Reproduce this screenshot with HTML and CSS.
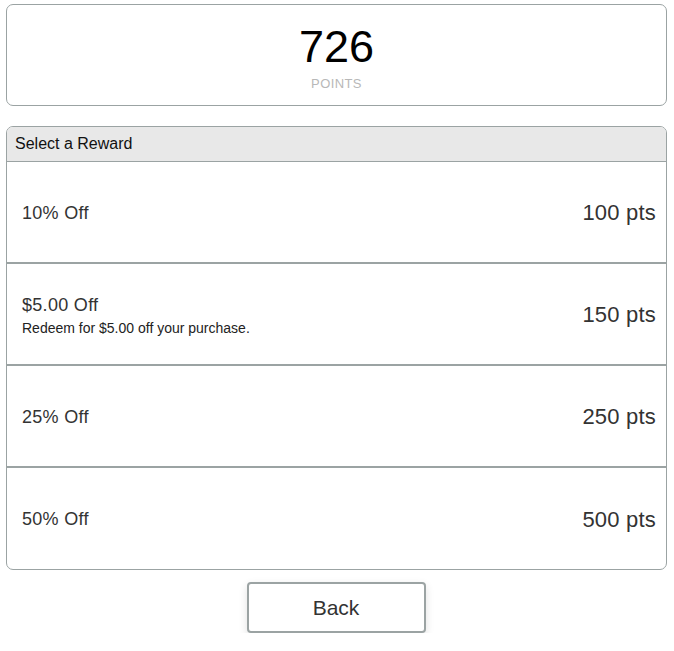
FILE: index.html
```html
<!DOCTYPE html>
<html>
<head>
<meta charset="utf-8">
<link rel="stylesheet" href="styles.css">
</head>
<body>
<div class="points-card">
  <div class="points-value">726</div>
  <div class="points-label">POINTS</div>
</div>
<div class="panel">
  <div class="panel-header">Select a Reward</div>
  <div class="row">
    <div class="row-text"><div class="row-title">10% Off</div></div>
    <div class="row-pts">100 pts</div>
  </div>
  <div class="row">
    <div class="row-text"><div class="row-title">$5.00 Off</div><div class="row-desc">Redeem for $5.00 off your purchase.</div></div>
    <div class="row-pts">150 pts</div>
  </div>
  <div class="row">
    <div class="row-text"><div class="row-title">25% Off</div></div>
    <div class="row-pts">250 pts</div>
  </div>
  <div class="row">
    <div class="row-text"><div class="row-title">50% Off</div></div>
    <div class="row-pts">500 pts</div>
  </div>
</div>
<div class="actions">
  <button class="back-btn">Back</button>
</div>
</body>
</html>
```
FILE: styles.css
```css
html, body { background: #fff; }
body {
  margin: 4px 7px 0 6px;
  font-family: "Liberation Sans", Arial, sans-serif;
  color: #333;
}
.points-card {
  box-sizing: border-box;
  height: 102px;
  border: 1px solid #9ba3a3;
  border-radius: 7px;
  display: flex;
  flex-direction: column;
  align-items: center;
  padding-top: 19px;
}
.points-value {
  font-size: 45px;
  line-height: 46px;
  color: #000;
}
.points-label {
  font-size: 13px;
  line-height: 14px;
  letter-spacing: 0.4px;
  color: #b8b8b8;
  margin-top: 7px;
}
.panel {
  margin-top: 20px;
  border: 1px solid #9ba3a3;
  border-radius: 7px;
  overflow: hidden;
}
.panel-header {
  box-sizing: border-box;
  height: 35px;
  background: #e8e8e8;
  border-bottom: 1px solid #9ba3a3;
  font-size: 16px;
  color: #111;
  padding: 0 8px;
  display: flex;
  align-items: center;
}
.row {
  box-sizing: border-box;
  height: 102px;
  display: flex;
  align-items: center;
  justify-content: space-between;
  padding: 2px 10px 0 15px;
  border-bottom: 2px solid #9ba3a3;
}
.row:last-child { border-bottom: none; height: 101px; }
.row-title { font-size: 18px; letter-spacing: 0.3px; color: #333; line-height: 21px; }
.row-desc { font-size: 14px; color: #222; margin-top: 4px; line-height: 16px; }
.row-pts { font-size: 22px; letter-spacing: 0.2px; color: #333; }
.actions {
  display: flex;
  justify-content: center;
  padding-top: 12px;
  padding-right: 1px;
}
.back-btn {
  width: 179px;
  height: 51px;
  background: #fff;
  border: 2px solid #9ba3a3;
  border-radius: 4px;
  box-shadow: 0 3px 8px rgba(0,0,0,0.12);
  font-family: "Liberation Sans", Arial, sans-serif;
  font-size: 21px;
  color: #333;
}
```
